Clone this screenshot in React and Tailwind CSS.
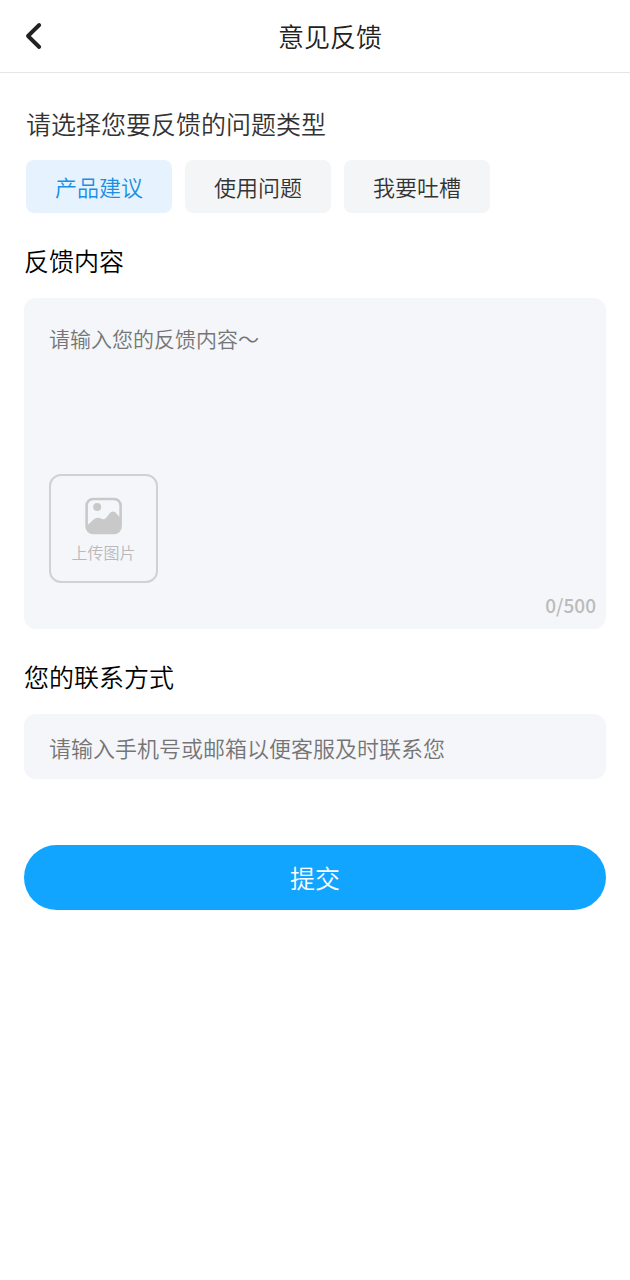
import React, { useState } from 'react';

const FEEDBACK_TYPES = [
  { id: 'suggest', label: '产品建议' },
  { id: 'usage', label: '使用问题' },
  { id: 'complain', label: '我要吐槽' },
];

const MAX_LENGTH = 500;

const BackIcon = () => (
  <svg viewBox="0 0 20 32" className="w-5 h-8" fill="none" stroke="#222222" strokeWidth="3.9" strokeLinecap="round" strokeLinejoin="round">
    <path d="M15.2 5 L4 16 L15.2 27" />
  </svg>
);

const PictureIcon = () => (
  <svg viewBox="0 0 38 38" className="w-[38px] h-[38px]" fill="none">
    <rect x="1.6" y="2" width="34" height="34" rx="6.5" stroke="#c9c9c9" strokeWidth="2.6" />
    <circle cx="12.2" cy="10" r="4" fill="#c9c9c9" />
    <path
      d="M2 28.5 C5.5 26 9 20.8 13 20.8 C16 20.8 17.6 23.4 20 21.8 C22.8 19.8 24.6 14.4 28 14.4 C31.4 14.4 32.6 18.8 35.6 20.8 V29.5 A6.5 6.5 0 0 1 29.1 36 H8.1 A6.5 6.5 0 0 1 1.6 29.5 Z"
      fill="#c9c9c9"
    />
  </svg>
);

const App = () => {
  const [type, setType] = useState('suggest');
  const [content, setContent] = useState('');
  const [contact, setContact] = useState('');

  return (
    <div className="min-h-screen w-full bg-white font-[350] font-['Noto_Sans_CJK_SC_DemiLight','Noto_Sans_CJK_SC',sans-serif]">

      {/* Header */}
      <header className="flex items-center h-[73px] pl-6 pr-[14px] border-b border-[#e6e6e6]">
        <button type="button" aria-label="返回" className="cursor-pointer">
          <BackIcon />
        </button>
        <h1 className="flex-1 text-center text-[26px] leading-9 text-[#222222]">意见反馈</h1>
      </header>

      <form className="px-6 pt-8" onSubmit={(e) => e.preventDefault()}>

        {/* Feedback type */}
        <h2 className="pl-0.5 text-[25px] leading-9 text-[#333333]">请选择您要反馈的问题类型</h2>
        <div className="flex gap-[13px] mt-[19px] pl-0.5">
          {FEEDBACK_TYPES.map((item) => (
            <button
              key={item.id}
              type="button"
              onClick={() => setType(item.id)}
              className={`w-[146px] h-[53px] rounded-lg text-[22px] cursor-pointer ${
                type === item.id ? 'bg-[#e6f3ff] text-[#1a8fe3]' : 'bg-[#f3f5f7] text-[#333333]'
              }`}
            >
              {item.label}
            </button>
          ))}
        </div>

        {/* Feedback content */}
        <label htmlFor="content" className="block mt-[29px] text-[25px] leading-9 text-black">反馈内容</label>
        <div className="mt-5 rounded-xl bg-[#f4f6fa]">
          <textarea
            id="content"
            value={content}
            maxLength={MAX_LENGTH}
            onChange={(e) => setContent(e.target.value)}
            placeholder="请输入您的反馈内容～"
            className="block w-full h-[176px] px-[25px] pt-6 text-[21px] leading-8 text-[#333333] placeholder:text-[#757575] resize-none outline-none"
          />
          <label className="flex flex-col items-center w-[109px] h-[109px] ml-[25px] pt-[21px] rounded-xl border-2 border-[#d0d1d4] cursor-pointer">
            <PictureIcon />
            <span className="mt-[5px] text-base leading-6 text-[#b8b9bc]">上传图片</span>
            <input type="file" accept="image/*" className="sr-only" />
          </label>
          <p className="mt-2 pr-[10px] pb-[10px] text-right text-[19px] leading-7 font-medium font-['Noto_Sans_CJK_SC',sans-serif] text-[#bbbbbb]">
            {content.length}/{MAX_LENGTH}
          </p>
        </div>

        {/* Contact */}
        <label htmlFor="contact" className="block mt-[29px] text-[25px] leading-9 text-black">您的联系方式</label>
        <input
          id="contact"
          type="text"
          value={contact}
          onChange={(e) => setContact(e.target.value)}
          placeholder="请输入手机号或邮箱以便客服及时联系您"
          className="block w-full h-[65px] mt-5 px-[25px] rounded-xl bg-[#f4f6fa] text-[22px] text-[#333333] placeholder:text-[#757575] outline-none"
        />

        <button type="submit" className="block w-full h-[65px] mt-[66px] rounded-full bg-[#12a5ff] text-[25px] text-white cursor-pointer">
          提交
        </button>
      </form>
    </div>
  );
};

export default App;
